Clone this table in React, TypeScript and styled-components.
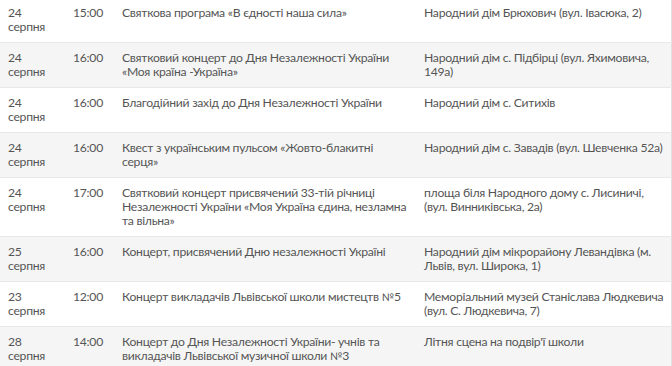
import React from 'react';
import styled, {createGlobalStyle} from 'styled-components';

const GlobalStyle = createGlobalStyle`
  html, body {
    margin: 0;
    padding: 0;
    background: #fff;
  }
  body {
    font-family: Lato, "Open Sans", "Noto Sans", sans-serif;
  }
`

const Wrap = styled.div`
  width: 672px;
  height: 366px;
  overflow: hidden;
  background: #fff;
`

const Table = styled.table`
  width: 672px;
  margin-top: -3px;
  border-collapse: collapse;
  table-layout: fixed;
  border-right: 1px solid #e0e0e0;
  font-size: 12.2px;
  letter-spacing: -0.28px;
  line-height: 14px;
  color: #555;
`

const Row = styled.tr<{$shade: boolean}>`
  background: ${p => (p.$shade ? '#f5f5f5' : '#fff')};
  border-top: 1px solid #e8e8e8;
`

const Cell = styled.td<{$w?: number}>`
  box-sizing: border-box;
  width: ${p => (p.$w ? `${p.$w}px` : 'auto')};
  padding: 8px 6px 8px 8px;
  vertical-align: top;
  text-align: left;
`

const Num = styled.span`
  font-size: 10.6px;
  letter-spacing: 0;
`

interface IEvent {
  day: string
  time: string
  title: string
  place: string
}

const events: IEvent[] = [
  {day: '24', time: '15:00', title: 'Святкова програма «В єдності наша сила»', place: 'Народний дім Брюхович (вул. Івасюка, 2)'},
  {day: '24', time: '16:00', title: 'Святковий концерт до Дня Незалежності України «Моя країна -Україна»', place: 'Народний дім с. Підбірці (вул. Яхимовича, 149а)'},
  {day: '24', time: '16:00', title: 'Благодійний захід до Дня Незалежності України', place: 'Народний дім с. Ситихів'},
  {day: '24', time: '16:00', title: 'Квест з українським пульсом «Жовто-блакитні серця»', place: 'Народний дім с. Завадів (вул. Шевченка 52а)'},
  {day: '24', time: '17:00', title: 'Святковий концерт присвячений 33-тій річниці Незалежності України «Моя Україна єдина, незламна та вільна»', place: 'площа біля Народного дому с. Лисиничі, (вул. Винниківська, 2а)'},
  {day: '25', time: '16:00', title: 'Концерт, присвячений Дню незалежності Україні', place: 'Народний дім мікрорайону Левандівка (м. Львів, вул. Широка, 1)'},
  {day: '23', time: '12:00', title: 'Концерт викладачів Львівської школи мистецтв №5', place: 'Меморіальний музей Станіслава Людкевича (вул. С. Людкевича, 7)'},
  {day: '28', time: '14:00', title: 'Концерт до Дня Незалежності України- учнів та викладачів Львівської музичної школи №3', place: "Літня сцена на подвір'ї школи"},
]

// "№" is very wide in Lato, so it gets a smaller size
const renderTitle = (title: string) => {
  const parts = title.split('№')
  if (parts.length === 1) return title
  return (
    <>
      {parts[0]}<Num>№</Num>{parts[1]}
    </>
  )
}

const App = () => {
  return (
    <>
      <GlobalStyle/>
      <Wrap>
        <Table>
          <tbody>
            {events.map((ev, i) => (
              <Row key={i} $shade={i % 2 === 1}>
                <Cell $w={65}>{ev.day}<br/>серпня</Cell>
                <Cell $w={49}>{ev.time}</Cell>
                <Cell $w={302}>{renderTitle(ev.title)}</Cell>
                <Cell>{ev.place}</Cell>
              </Row>
            ))}
          </tbody>
        </Table>
      </Wrap>
    </>
  );
};

export default App;
